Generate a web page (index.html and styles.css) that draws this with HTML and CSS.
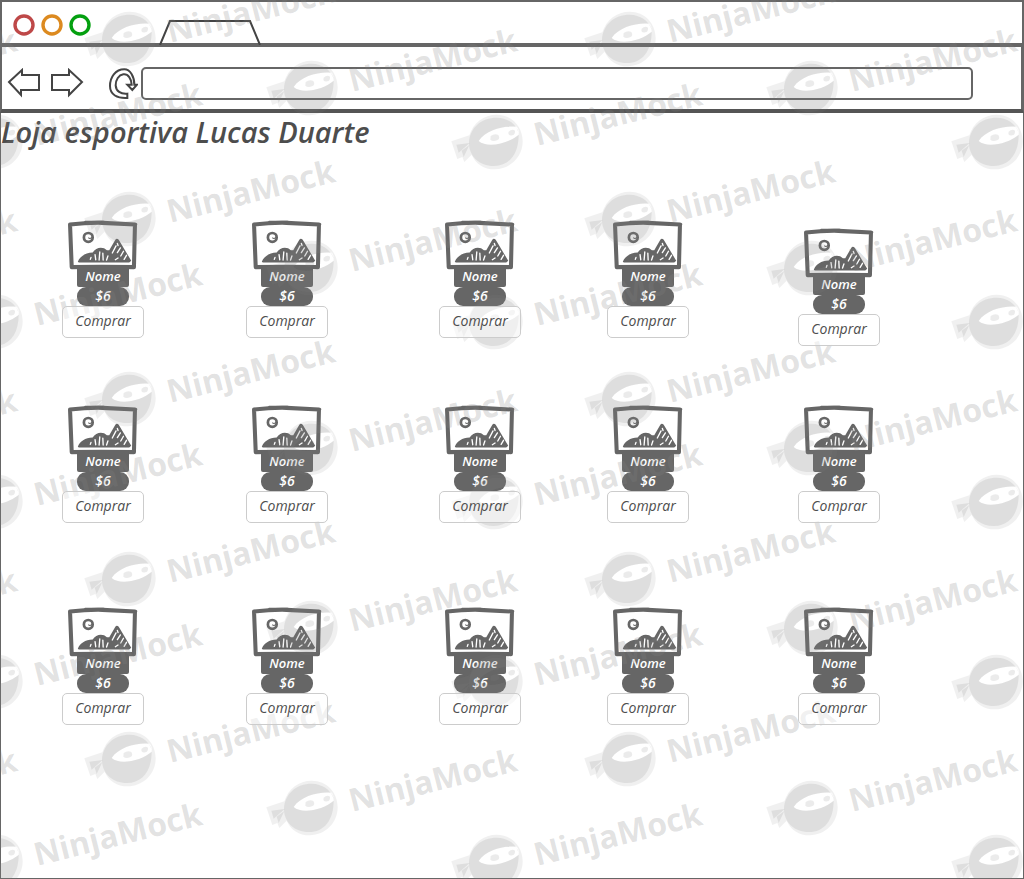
FILE: index.html
```
<!DOCTYPE html>
<html lang="pt">
<head>
<meta charset="utf-8">
<meta name="viewport" content="width=device-width, initial-scale=1">
<title>Loja esportiva Lucas Duarte</title>
<link rel="stylesheet" href="styles.css">
</head>
<body>
<div class="window">
  <header class="chrome">
    <div class="tabs">
      <svg class="lights" viewBox="12 13 80 24" fill="none" stroke-width="3.4" aria-hidden="true">
        <circle cx="24" cy="25" r="9" stroke="#be4848"/>
        <circle cx="52" cy="25" r="9" stroke="#dc8a20"/>
        <circle cx="80" cy="25" r="9" stroke="#04a010"/>
      </svg>
      <svg class="tab" viewBox="158 19 104 26" fill="none" stroke="#444" stroke-width="2" aria-hidden="true">
        <path d="M160 45 170 21H250L260 45"/>
      </svg>
    </div>
    <div class="nav">
      <div class="history">
        <button class="tool" type="button" aria-label="Voltar">
          <svg class="arrow" viewBox="7 68 34 30"><path d="M9 82 22 70V75H39V90H21V95Z"/></svg>
        </button>
        <button class="tool" type="button" aria-label="Avançar">
          <svg class="arrow" viewBox="50 68 34 30"><path d="M52 75H69V70L82 82 69 95V90H52Z"/></svg>
        </button>
      </div>
      <button class="tool" type="button" aria-label="Recarregar">
        <svg class="reload" viewBox="324 170 90 96"><path d="M382 260V247C362 249 348 239 347 222C347 205 356 191 370 189C385 187 394 203 395 220H382L397 236 411 220H403C403 196 391 174 373 174C346 174 330 198 330 224C330 250 352 262 382 260Z"/></svg>
      </button>
      <input class="address" type="text" aria-label="Endereço">
    </div>
  </header>
  <main class="page">
    <h1 class="title">Loja esportiva Lucas Duarte</h1>
    <div id="shop"></div>
  </main>
  <svg class="watermark" aria-hidden="true">
    <defs>
      <g id="mark">
        <g transform="scale(.3333) translate(-133 -88)">
          <path fill-opacity=".5" fill-rule="evenodd" d="M2 86 56 68C68 30 100 6 138 6C184 6 216 42 216 86C216 132 180 169 132 170C100 170 75 154 63 126L41 148 35 133 20 139Z M84 85C105 52 160 38 199 42Q206 52 204 66C175 92 110 108 84 85Z"/>
          <path fill-opacity=".68" fill-rule="evenodd" d="M55 91C57 45 92 15 138 15C170 16 194 32 203 58L204 66C204 125 175 160 130 160C85 160 55 130 55 91Z M84 85C105 52 160 38 195 42Q205 52 204 66C175 92 110 108 84 85Z"/>
          <path fill-opacity=".68" d="M17 96 57 91 24 120ZM56 97 33 114 39 133ZM120 70Q132 62 143 67Q150 79 139 83Q126 88 119 81ZM174 57Q184 48 193 54Q194 66 185 68Q170 70 174 57Z"/>
        </g>
        <text class="brand" transform="translate(42 4) rotate(-14)">NinjaMock</text>
      </g>
      <g id="band">
        <use href="#mark" x="-372" y="39"/><use href="#mark" x="128" y="39"/><use href="#mark" x="628" y="39"/><use href="#mark" x="1128" y="39"/>
        <use href="#mark" x="-190" y="88"/><use href="#mark" x="310" y="88"/><use href="#mark" x="810" y="88"/><use href="#mark" x="1310" y="88"/>
        <use href="#mark" x="-5" y="142"/><use href="#mark" x="495" y="142"/><use href="#mark" x="995" y="142"/>
      </g>
    </defs>
    <use href="#band"/><use href="#band" y="180"/><use href="#band" y="360"/><use href="#band" y="540"/><use href="#band" y="720"/>
  </svg>
</div>
<svg class="sprites" aria-hidden="true">
  <symbol id="photo" viewBox="24 18 207 147">
    <path d="M30 31Q80 25 126 26L222 31 219 157Q120 155 35 157Z" fill="none" stroke="#666" stroke-width="12" stroke-linejoin="round"/>
    <path d="M216 30H226M75 23H130" fill="none" stroke="#666" stroke-width="6" stroke-linecap="round"/>
    <circle cx="84" cy="69" r="13" fill="none" stroke="#666" stroke-width="8"/>
    <path d="M84 70Q90 76 94 68" fill="none" stroke="#666" stroke-width="3"/>
    <path d="M53 141C59 126 75 114 97 114C107 97 128 96 139 107H146L164 76Q168 70 174 76L211 138 205 143H56Z" fill="#666"/>
    <path d="M90 134 92 128M106 135 104 120M116 136 118 112M128 136 127 116M138 136 142 124M155 115 166 94M170 87 172 93M179 100 170 114M188 110 180 124M197 122 190 134M164 135 172 130" fill="none" stroke="#fff" stroke-width="4" stroke-linecap="round"/>
  </symbol>
</svg>
<script src="shop.js"></script>
</body>
</html>
```
FILE: styles.css
```
* { box-sizing: border-box; }
body {
  margin: 0;
  background: #fff;
  color: #4d4d4d;
  font-family: "Open Sans", "Noto Sans", sans-serif;
}
svg { display: block; }
.sprites { position: absolute; width: 0; height: 0; }
.window {
  position: relative;
  display: flex;
  flex-direction: column;
  min-height: 100vh;
}

.chrome {
  border: 2px solid #666;
  border-bottom: 4px solid #555;
}
.tabs {
  display: flex;
  justify-content: flex-start;
  gap: 66px;
  height: 45px;
  padding: 11px 0 0 10px;
  border-bottom: 4px solid #666;
}
.lights { width: 80px; height: 24px; }
.tab { width: 104px; height: 26px; margin-top: 6px; }
.nav {
  display: flex;
  align-items: center;
  gap: 3px;
  padding: 20px 48px 9px 5px;
  border-right: 1px solid #666;
}
.history { display: flex; gap: 9px; margin: 0 21px 2px 0; }
.tool {
  padding: 0;
  border: 0;
  background: none;
  fill: none;
  stroke: #444;
  stroke-width: 2;
}
.arrow { width: 34px; height: 30px; }
.reload { width: 30px; height: 32px; stroke-width: 6; }
.address {
  flex: 1;
  min-width: 0;
  height: 33px;
  padding: 0 8px;
  border: 2px solid #666;
  border-radius: 5px;
  background: none;
  font: inherit;
}

.page {
  flex: 1;
  border: 1px solid #666;
  border-top: 0;
}
.title {
  margin: 0 0 69px;
  font-size: 29px;
  font-style: italic;
  font-weight: 600;
  line-height: 38px;
}
.row {
  display: grid;
  grid-template-columns: 184fr 193fr 168fr 191fr 225fr;
  align-items: start;
  margin-bottom: 67px;
  padding-left: 61px;
}
.row.spaced { margin-bottom: 84px; }
.card {
  display: flex;
  flex-direction: column;
  align-items: center;
  width: 82px;
  font-size: 14px;
  font-style: italic;
}
.card.low { margin: 8px 0 -8px; }
.photo { width: 70px; height: 50px; }
.name, .price {
  width: 52px;
  background: #666;
  color: #fff;
  font-weight: 600;
  text-align: center;
}
.name {
  height: 20px;
  margin-top: -3px;
  border-radius: 2px;
  font-size: 13px;
  line-height: 18px;
}
.price { height: 19px; border-radius: 9px; line-height: 18px; }
.buy {
  z-index: 2;
  width: 82px;
  height: 32px;
  padding: 0 0 4px;
  border: 1px solid #ccc;
  border-radius: 5px;
  background: rgba(255, 255, 255, .5);
  color: #4d4d4d;
  font: inherit;
}

.watermark {
  position: absolute;
  inset: 0;
  z-index: 1;
  width: 100%;
  height: 100%;
  overflow: hidden;
  pointer-events: none;
  fill: rgba(130, 130, 130, .23);
}
.brand { font-size: 32px; font-weight: 700; }
```
FILE: shop.js
```
const product = { name: 'Nome', price: '$6' };
const rows = [{ lowLast: true }, { spaced: true }, {}];

document.getElementById('shop').innerHTML = rows.map(row => {
  const cards = Array.from({ length: 5 }, (_, i) => `
    <article class="card${row.lowLast && i === 4 ? ' low' : ''}">
      <svg class="photo" role="img" aria-label="Foto do produto"><use href="#photo"/></svg>
      <div class="name">${product.name}</div>
      <div class="price">${product.price}</div>
      <button class="buy" type="button">Comprar</button>
    </article>`).join('');
  return `<section class="row${row.spaced ? ' spaced' : ''}">${cards}</section>`;
}).join('');
```
